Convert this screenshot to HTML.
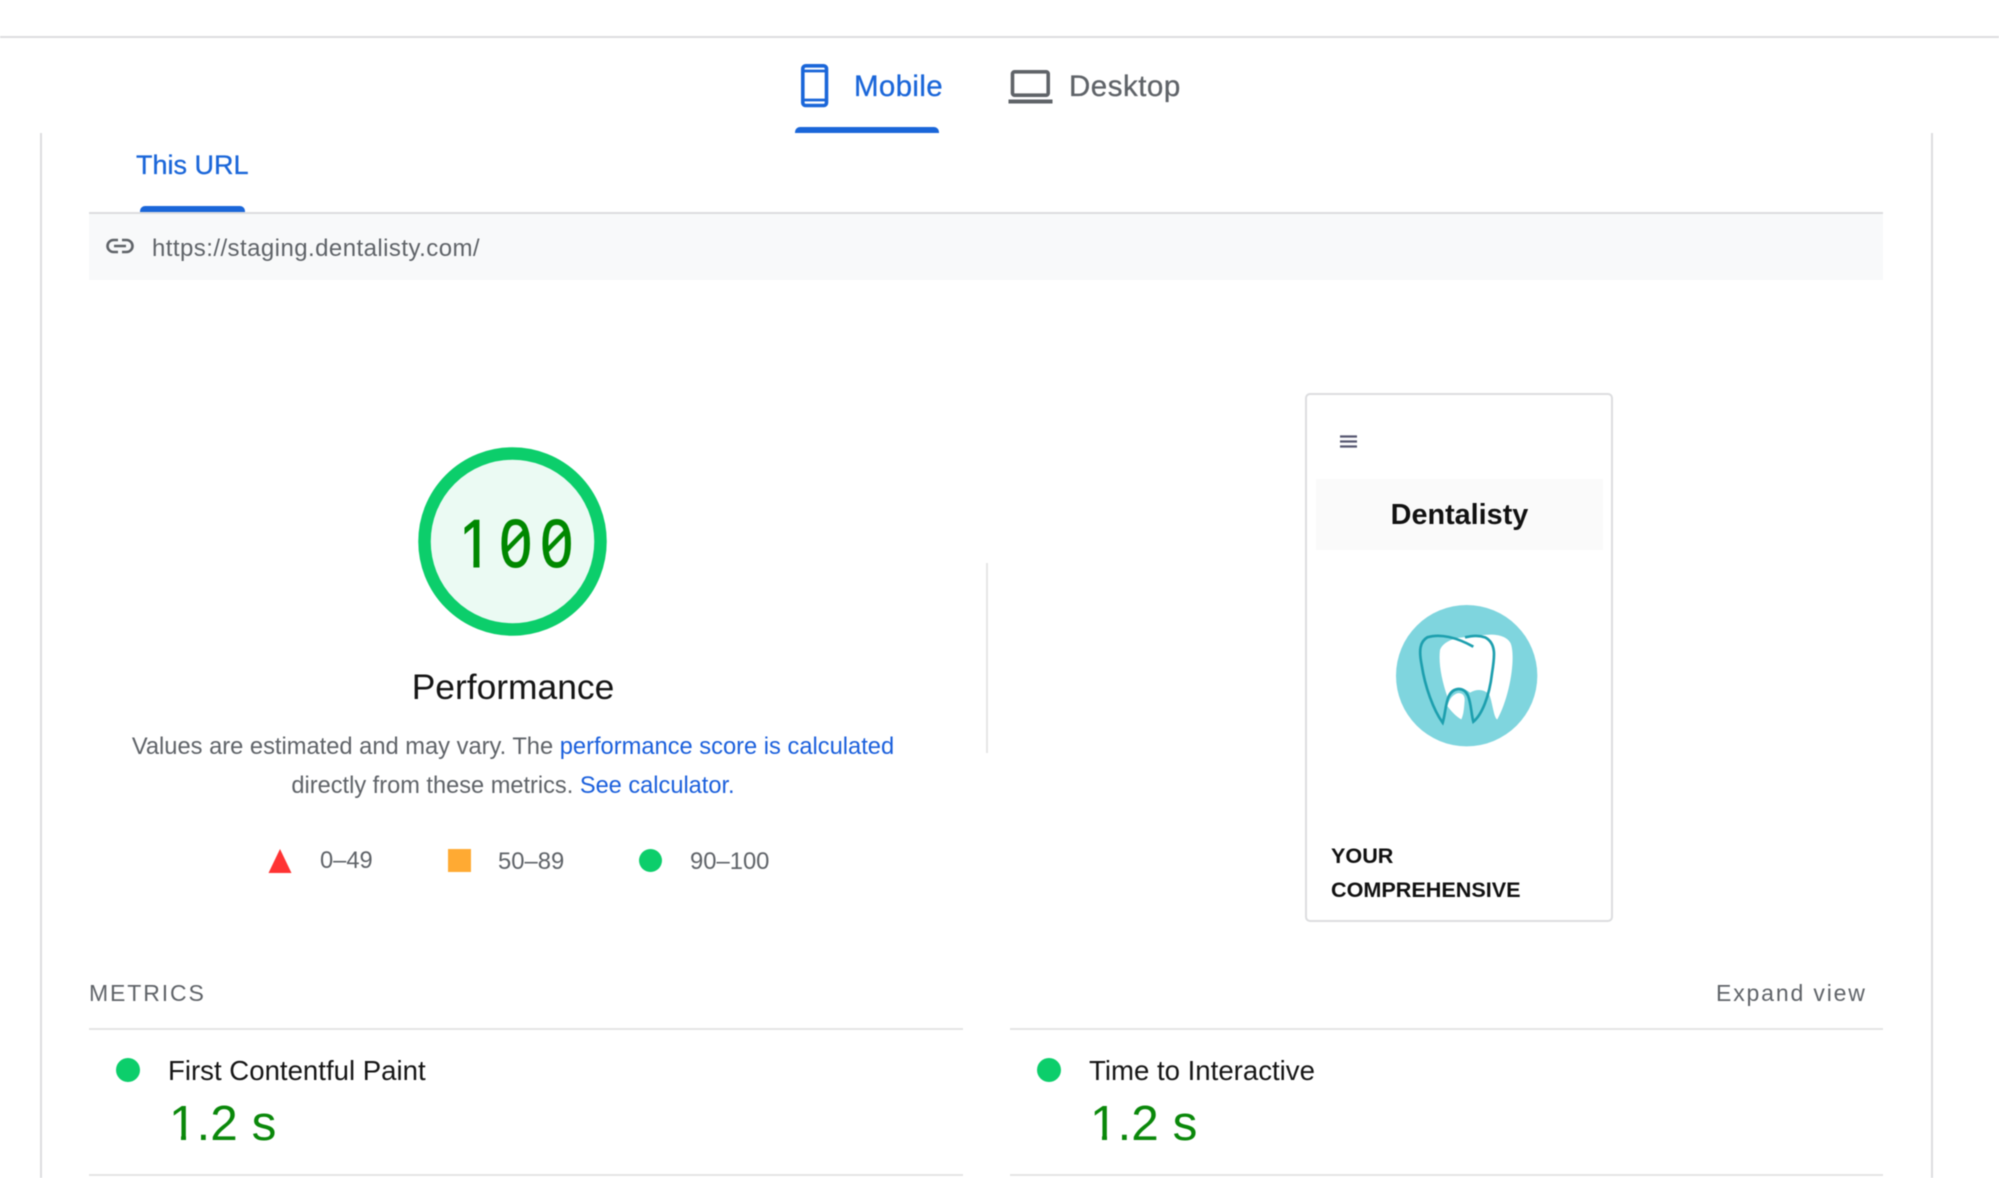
<!DOCTYPE html>
<html lang="en">
<head>
<meta charset="utf-8">
<title>PageSpeed Insights</title>
<style>
html,body{margin:0;padding:0;background:#fff;}
body{width:1999px;height:1178px;position:relative;overflow:hidden;font-family:"Liberation Sans",Arial,sans-serif;}
#p{position:absolute;left:0;top:0;width:1999px;height:1178px;filter:blur(.4px);}
.a{position:absolute;}
.t{position:absolute;white-space:nowrap;line-height:1;}
.b{color:#1a66d9;-webkit-text-stroke:.3px #1a66d9;}
.g{color:#5f6368;}
</style>
</head>
<body>
<div id="p">
<div class="a" style="left:0;top:36px;width:1999px;height:2px;background:#dcdddf"></div>

<!-- side borders -->
<div class="a" style="left:40px;top:133px;width:2px;height:1045px;background:#dcdddf"></div>
<div class="a" style="left:1931px;top:133px;width:2px;height:1045px;background:#dcdddf"></div>

<!-- tabs -->
<svg class="a" style="left:798px;top:62px" width="34" height="48" viewBox="0 0 34 48">
  <rect x="4.800" y="3.800" width="23.700" height="39.700" rx="2.800" fill="none" stroke="#1a66d9" stroke-width="3.600"/>
  <path d="M5 9H28M5 38H28" stroke="#1a66d9" stroke-width="2.800" fill="none"/>
</svg>
<div class="t b" style="left:854px;top:72px;font-size:29.500px;letter-spacing:.35px">Mobile</div>
<div class="a" style="left:795px;top:127px;width:144px;height:6px;background:#1a66d9;border-radius:5px 5px 0 0"></div>

<svg class="a" style="left:1008px;top:68px" width="46" height="38" viewBox="0 0 46 38">
  <rect x="4.500" y="3.800" width="35.700" height="23.400" rx="2" fill="none" stroke="#5f6368" stroke-width="3.600"/>
  <rect x=".5" y="31.500" width="44" height="4" fill="#5f6368"/>
</svg>
<div class="t g" style="left:1069px;top:72px;font-size:29.500px;letter-spacing:.5px;-webkit-text-stroke:.3px #5f6368">Desktop</div>

<!-- This URL -->
<div class="t b" style="left:136px;top:152px;font-size:27px">This URL</div>
<div class="a" style="left:140px;top:206px;width:105px;height:6px;background:#1a66d9;border-radius:5px 5px 0 0"></div>
<div class="a" style="left:89px;top:212px;width:1794px;height:2px;background:#dcdddf"></div>
<div class="a" style="left:89px;top:214px;width:1794px;height:66px;background:#f8f9fa"></div>
<svg class="a" style="left:106px;top:237px" width="28" height="18" viewBox="0 0 28 18">
  <path d="M12 3H7.500a6 6 0 0 0 0 12H12M16 3h4.500a6 6 0 0 1 0 12H16M8 9H20" fill="none" stroke="#5f6368" stroke-width="2.600"/>
</svg>
<div class="t g" style="left:152px;top:236.500px;font-size:24px;letter-spacing:.44px">https://staging.dentalisty.com/</div>

<!-- Gauge -->
<svg class="a" style="left:412px;top:441px" width="200" height="200" viewBox="0 0 200 200">
  <circle cx="100.500" cy="100.500" r="88" fill="#ebfaf3" stroke="#0cce6b" stroke-width="12.500"/>
</svg>
<svg class="a" style="left:450px;top:500px" width="130" height="80" viewBox="0 0 130 80">
  <text transform="translate(9.400,67) scale(.85,1)" x="0 47.300 95.500" y="0" font-family="Liberation Sans, sans-serif" font-size="68" fill="#008800" stroke="#008800" stroke-width="1">100</text>
  <rect x="11" y="60" width="12.400" height="9" fill="#ebfaf3"/>
  <rect x="29.500" y="60" width="11.500" height="9" fill="#ebfaf3"/>
  <path d="M54 52.700L76 30M95 52.700L117 30" stroke="#008800" stroke-width="4.500" fill="none"/>
</svg>

<div class="t" style="left:0;width:1026px;text-align:center;top:670px;font-size:35.400px;color:#151515">Performance</div>
<div class="t g" style="left:0;width:1026px;text-align:center;top:736px;font-size:23.700px">Values are estimated and may vary. The <span style="color:#1a5fdc">performance score is calculated</span></div>
<div class="t g" style="left:0;width:1026px;text-align:center;top:775px;font-size:23.600px">directly from these metrics. <span style="color:#1a5fdc">See calculator.</span></div>

<!-- Legend -->
<svg class="a" style="left:267.500px;top:848px" width="24" height="26" viewBox="0 0 24 26"><path d="M12 1L23.500 25H.5Z" fill="#ff3333"/></svg>
<div class="t g" style="left:320px;top:850px;font-size:23.700px">0–49</div>
<div class="a" style="left:448px;top:849px;width:23px;height:23px;background:#ffaa33"></div>
<div class="t g" style="left:498px;top:850px;font-size:23.800px">50–89</div>
<div class="a" style="left:639px;top:849px;width:23px;height:23px;border-radius:50%;background:#0cce6b"></div>
<div class="t g" style="left:690px;top:850px;font-size:23.800px">90–100</div>

<!-- Divider -->
<div class="a" style="left:986px;top:563px;width:2px;height:190px;background:#e6e6e6"></div>

<!-- Preview card -->
<div class="a" style="left:1305px;top:393px;width:304px;height:525px;border:2px solid #dcdddf;border-radius:5px;background:#fff"></div>
<svg class="a" style="left:1340px;top:434px" width="18" height="15" viewBox="0 0 18 15">
  <path d="M0 2.500H17M0 7.500H17M0 12.500H17" stroke="#555770" stroke-width="2.300"/>
</svg>
<div class="a" style="left:1316px;top:479px;width:287px;height:71px;background:#fafafa"></div>
<div class="t" style="left:1316px;width:287px;text-align:center;top:500.500px;font-size:28.800px;font-weight:bold;color:#111">Dentalisty</div>

<svg class="a" style="left:1390px;top:600px" width="155" height="155" viewBox="0 0 465 465">
  <circle cx="230" cy="227" r="212" fill="#7fd5de"/>
  <path fill="#fff" d="M150 150C160 120 210 108 245 112C290 100 345 98 362 130C378 170 360 290 322 358C312 358 306 300 298 285C285 268 262 265 240 278C225 262 190 260 172 290C155 240 145 190 150 150Z"/>
  <path fill="#fff" d="M172 318C185 270 225 270 224 300C222 330 220 345 214 358C198 350 185 335 172 318Z"/>
  <path fill="none" stroke="#1d9fae" stroke-width="8" d="M250 140C200 112 150 100 112 112C90 125 86 150 95 195C105 260 130 330 158 368C170 330 165 270 205 267C245 265 240 330 250 365C275 345 298 290 306 220C314 170 320 130 285 112C265 105 245 108 225 112"/>
</svg>

<div class="t" style="left:1331px;top:845px;font-size:21.600px;font-weight:bold;color:#111">YOUR</div>
<div class="t" style="left:1331px;top:879px;font-size:21.600px;font-weight:bold;color:#111">COMPREHENSIVE</div>

<!-- Metrics -->
<div class="t g" style="left:89px;top:982px;font-size:23px;letter-spacing:1.900px">METRICS</div>
<div class="t g" style="left:1716px;top:982px;font-size:23px;letter-spacing:1.850px">Expand view</div>
<div class="a" style="left:89px;top:1028px;width:874px;height:2px;background:#e4e4e4"></div>
<div class="a" style="left:1010px;top:1028px;width:873px;height:2px;background:#e4e4e4"></div>

<div class="a" style="left:116px;top:1058px;width:24px;height:24px;border-radius:50%;background:#0cce6b"></div>
<div class="t" style="left:168px;top:1057px;font-size:27.600px;color:#151515">First Contentful Paint</div>
<div class="t" style="left:169px;top:1099px;font-size:49.500px;color:#0a880a">1.2 s</div>
<div class="a" style="left:171px;top:1135px;width:10.400px;height:8px;background:#fff"></div>
<div class="a" style="left:186px;top:1135px;width:10.400px;height:8px;background:#fff"></div>

<div class="a" style="left:1037px;top:1058px;width:24px;height:24px;border-radius:50%;background:#0cce6b"></div>
<div class="t" style="left:1089px;top:1057px;font-size:27.600px;color:#151515">Time to Interactive</div>
<div class="t" style="left:1090px;top:1099px;font-size:49.500px;color:#0a880a">1.2 s</div>
<div class="a" style="left:1092px;top:1135px;width:10.400px;height:8px;background:#fff"></div>
<div class="a" style="left:1107px;top:1135px;width:10.400px;height:8px;background:#fff"></div>

<div class="a" style="left:89px;top:1174px;width:874px;height:2px;background:#e4e4e4"></div>
<div class="a" style="left:1010px;top:1174px;width:873px;height:2px;background:#e4e4e4"></div>
</div>
</body>
</html>
